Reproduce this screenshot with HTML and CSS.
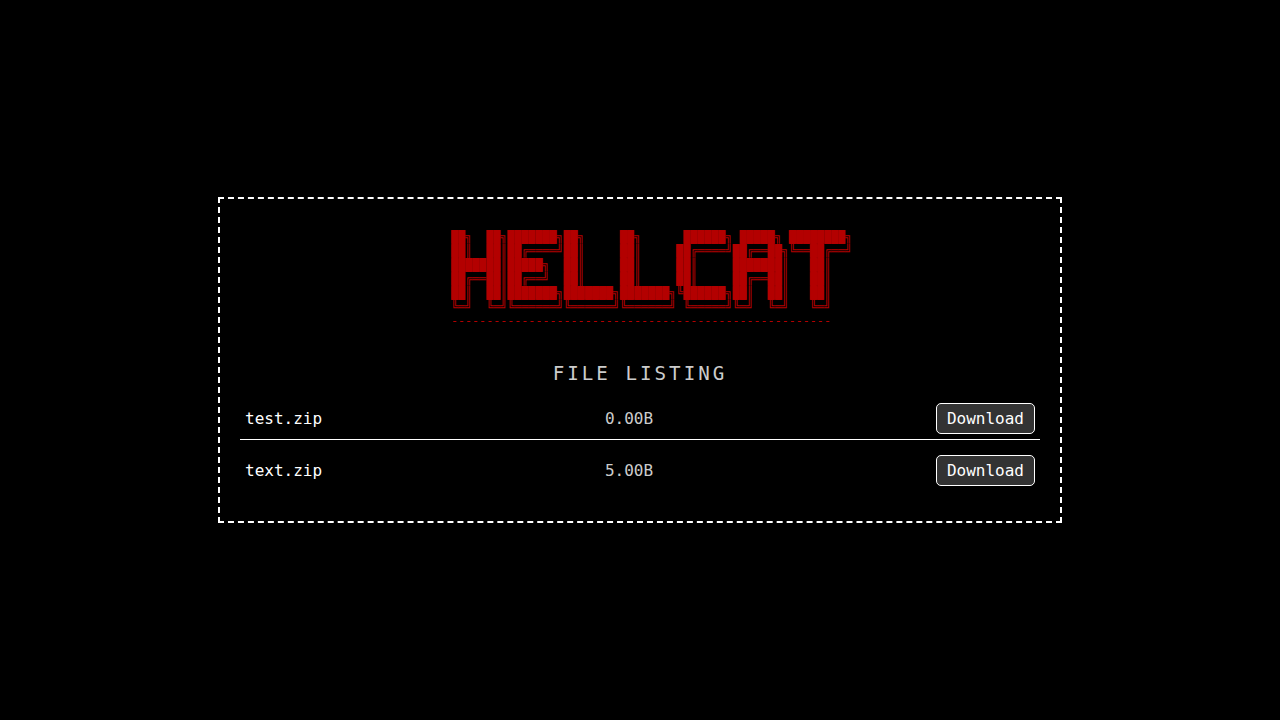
FILE: index.html
```
<!DOCTYPE html>
<html lang="en">
<head>
  <meta charset="UTF-8">
  <meta name="viewport" content="width=device-width, initial-scale=1.0">
  <title>File Listing</title>
  <link rel="stylesheet" href="styles.css">
</head>
<body>
  <div class="container">
    <pre class="banner"><code>██╗  ██╗███████╗██╗     ██╗      ██████╗ █████╗ ████████╗
██║  ██║██╔════╝██║     ██║     ██╔════╝██╔══██╗╚══██╔══╝
███████║█████╗  ██║     ██║     ██║     ███████║   ██║
██╔══██║██╔══╝  ██║     ██║     ██║     ██╔══██║   ██║
██║  ██║███████╗███████╗███████╗╚██████╗██║  ██║   ██║
╚═╝  ╚═╝╚══════╝╚══════╝╚══════╝ ╚═════╝╚═╝  ╚═╝   ╚═╝
------------------------------------------------------</code></pre>

    <h1>FILE LISTING</h1>

    <ul class="file-list">
      <li>
        <span class="file-name">test.zip</span>
        <span class="file-size">0.00B</span>
        <button type="button">Download</button>
      </li>
      <li>
        <span class="file-name">text.zip</span>
        <span class="file-size">5.00B</span>
        <button type="button">Download</button>
      </li>
    </ul>
  </div>
</body>
</html>
```
FILE: styles.css
```
* {
  box-sizing: border-box;
}
body {
  margin: 0;
  min-height: 100vh;
  display: flex;
  justify-content: center;
  align-items: center;
  background-color: #000;
  color: #fff;
  font-family: "DejaVu Sans Mono", monospace;
  font-size: 16px;
}
.container {
  width: 100%;
  max-width: 844px;
  padding: 20px;
  border: 2px dashed #fff;
}
.banner {
  display: flex;
  justify-content: center;
  margin: 11px 0 34px;
  padding-left: 23px;
  color: #b30000;
  font-size: 13px;
}
.banner code {
  font-family: "DejaVu Sans Mono", monospace;
  font-size: 0.9em;
}
h1 {
  margin: 0 0 13px;
  color: #ccc;
  font-size: 1.2em;
  font-weight: normal;
  letter-spacing: 3px;
  text-align: center;
}
.file-list {
  list-style: none;
  margin: 0;
  padding: 0;
}
.file-list li {
  display: flex;
  justify-content: space-between;
  align-items: center;
  margin-bottom: 10px;
  padding: 5px;
  border-bottom: 1px solid #fff;
}
.file-list li:last-child {
  border-bottom: none;
}
.file-size {
  color: #ccc;
}
button {
  padding: 5px 10px;
  background-color: #333;
  color: #fff;
  border: 1px solid #fff;
  border-radius: 5px;
  font-family: inherit;
  font-size: 16px;
  cursor: pointer;
}
button:hover {
  background-color: #555;
}
```
